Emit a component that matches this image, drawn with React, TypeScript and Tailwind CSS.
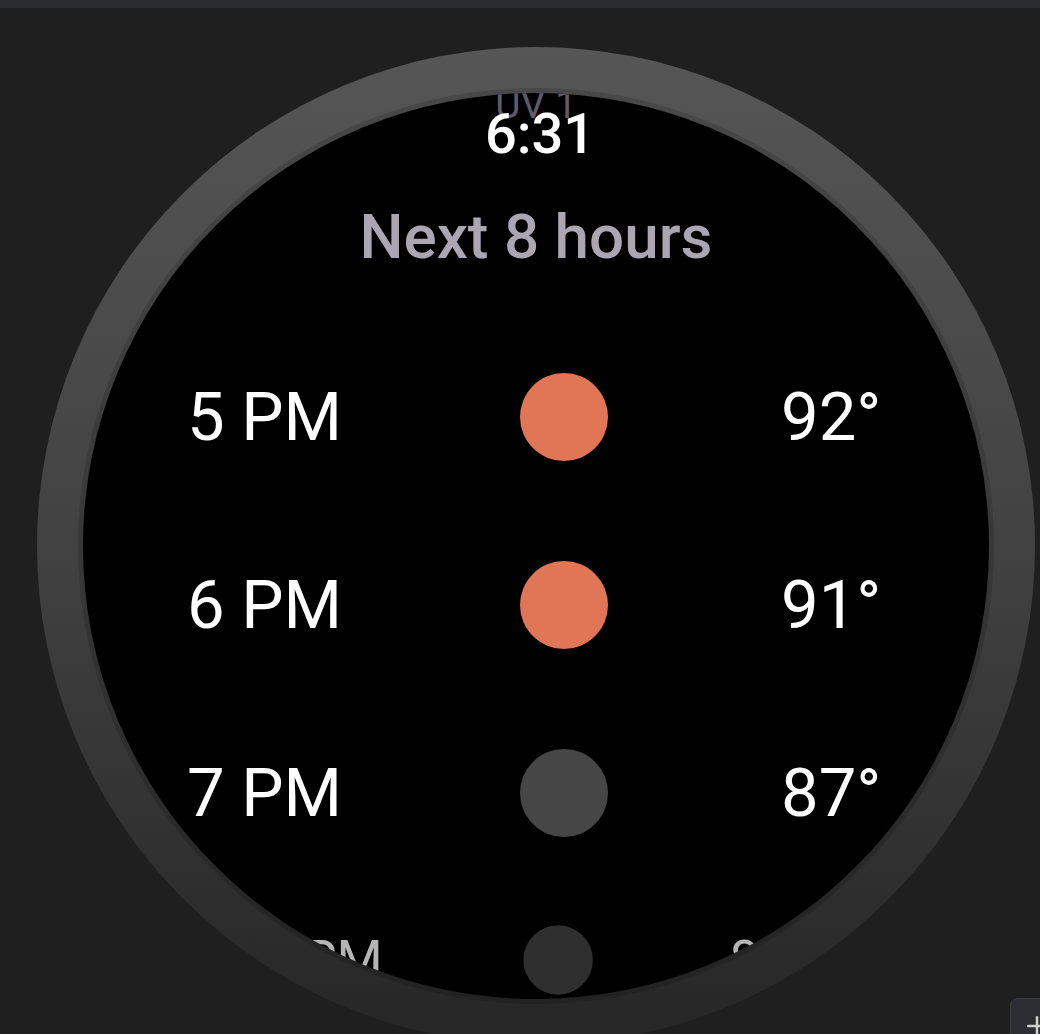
import { Plus } from "lucide-react";

type Hour = { label: string; temp: string; dot: string };

const hours: Hour[] = [
  { label: "5 PM", temp: "92°", dot: "bg-[#e07655]" },
  { label: "6 PM", temp: "91°", dot: "bg-[#e07655]" },
  { label: "7 PM", temp: "87°", dot: "bg-[#464646]" },
];

function HourRow({ label, temp, dot }: Hour) {
  return (
    <div className="flex h-[88px] items-center pl-[104px] text-[67px] font-normal leading-none text-white">
      <span className="w-[333px]">{label}</span>
      <span className={`h-[88px] w-[88px] rounded-full ${dot}`} />
      <span className="ml-[173px]">{temp}</span>
    </div>
  );
}

export default function App() {
  return (
    <div
      className="relative h-screen w-full overflow-hidden bg-[#1f1f1f]"
      style={{ fontFamily: "Roboto, 'Noto Sans', sans-serif" }}
    >
      <div className="h-2 bg-[#2b2c31]" />

      <div className="pl-[37px] pt-[39px]">
        <div className="h-[998px] w-[998px] rounded-full bg-gradient-to-b from-[#565656] via-[#424242] to-[#262626] p-[46px]">
          <div className="relative h-full w-full overflow-hidden rounded-full bg-black shadow-[0_0_0_5px_rgba(0,0,0,0.14)]">
            <div className="-mt-[7px] flex flex-col">
              <div className="text-center text-[39px] leading-none text-[#5f5b6b]">
                UV 1
              </div>
              <div className="mt-[81px] text-center text-[62px] font-medium leading-none text-[#aaa7b3]">
                Next 8 hours
              </div>
              <div className="mt-[105px] flex flex-col gap-[100px]">
                {hours.map((h) => (
                  <HourRow key={h.label} {...h} />
                ))}
              </div>
              <div className="mt-[79px] flex h-[88px] origin-[453px_44px] scale-[0.79] items-center pl-[104px] text-[67px] leading-none text-[#b5b5b5]">
                <span className="w-[333px]">8 PM</span>
                <span className="h-[88px] w-[88px] rounded-full bg-[#2f2f2f]" />
                <span className="ml-[173px]">86°</span>
              </div>
            </div>

            <div className="absolute inset-x-0 top-[13px] pl-[8px] text-center text-[56px] font-medium leading-none text-white">
              6:31
            </div>
          </div>
        </div>
      </div>

      <button className="absolute left-[1010px] top-[998px] flex h-[56px] w-[54px] items-center justify-center rounded-lg border border-[#3d3f44] bg-[#2b2d32] text-[#d0d0d0]">
        <Plus size={30} strokeWidth={2} />
      </button>
    </div>
  );
}
